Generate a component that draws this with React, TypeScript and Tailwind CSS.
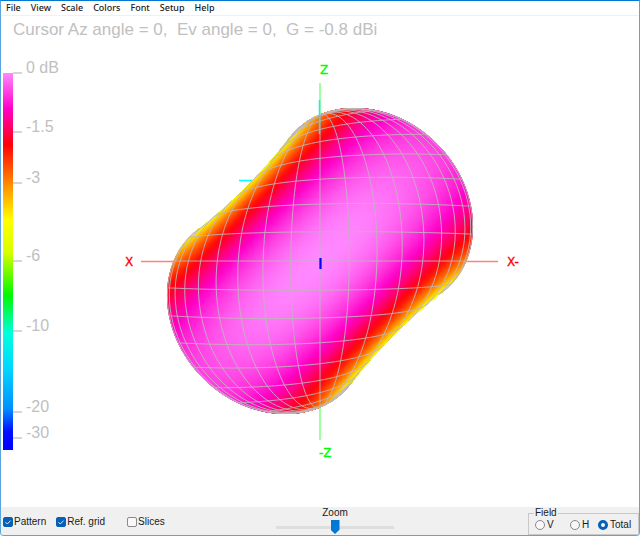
import { useState } from "react";

type Rgb = [number, number, number];

const MENUS = ["File", "View", "Scale", "Colors", "Font", "Setup", "Help"];
const FIELDS = ["V", "H", "Total"];

// Relative field strength -> colour
const RAMP: { level: number; rgb: Rgb }[] = [
  { level: 1, rgb: [255, 136, 255] },
  { level: 0.905, rgb: [255, 0, 200] },
  { level: 0.81, rgb: [255, 0, 8] },
  { level: 0.708, rgb: [255, 136, 0] },
  { level: 0.61, rgb: [255, 255, 0] },
  { level: 0.525, rgb: [216, 255, 0] },
  { level: 0.41, rgb: [0, 248, 0] },
  { level: 0.31, rgb: [0, 255, 220] },
  { level: 0.22, rgb: [0, 216, 255] },
  { level: 0.11, rgb: [0, 144, 255] },
  { level: 0.05, rgb: [0, 16, 255] },
  { level: 0, rgb: [0, 0, 255] },
];

const TICKS = [
  { label: "0 dB", y: 73 },
  { label: "-1.5", y: 132 },
  { label: "-3", y: 183 },
  { label: "-6", y: 261 },
  { label: "-10", y: 331 },
  { label: "-20", y: 412 },
  { label: "-30", y: 438 },
];

const CX = 320;
const CY = 261;
const RADIUS = 169;
const STEP = 2.5;
const GRID = 10;
const rad = (deg: number) => (deg * Math.PI) / 180;

function rampColor(level: number) {
  for (let i = 1; i < RAMP.length; i++) {
    const hi = RAMP[i - 1];
    const lo = RAMP[i];
    if (level >= lo.level) {
      const t = Math.min(1, (level - lo.level) / (hi.level - lo.level));
      const c = lo.rgb.map((v, k) => Math.round(v + (hi.rgb[k] - v) * t));
      return `rgb(${c.join(",")})`;
    }
  }
  return "rgb(0,0,255)";
}

// Power gain towards azimuth/elevation, 1 at the broadside direction
function gain(az: number, el: number) {
  const x = Math.cos(rad(el)) * Math.sin(rad(az));
  const y = Math.cos(rad(el)) * Math.cos(rad(az));
  const z = Math.sin(rad(el));
  const a2 = (x - z) ** 2 / 2;
  const b2 = (x + z) ** 2 / 2;
  const g = 1 - a2 - 0.1 * b2 + 0.2 * a2 * b2 - 0.2 * a2 * y * y;
  return Math.min(1, Math.max(0.02, g));
}

function project(az: number, el: number): [number, number] {
  const r = RADIUS * (1 + 0.45 * Math.log10(gain(az, el)));
  return [CX + r * Math.cos(rad(el)) * Math.sin(rad(az)), CY - r * Math.sin(rad(el))];
}

function buildSurface() {
  const patches: { d: string; fill: string }[] = [];
  let grid = "";
  const f = (p: [number, number]) => `${p[0].toFixed(2)} ${p[1].toFixed(2)}`;
  for (let el = -90; el < 90; el += STEP) {
    for (let az = -90; az < 90; az += STEP) {
      const g = gain(az + STEP / 2, el + STEP / 2);
      const a = project(az, el);
      const b = project(az + STEP, el);
      const c = project(az + STEP, el + STEP);
      const d = project(az, el + STEP);
      // Skip patches that face away from the viewer or sit inside the null
      const area = (c[0] - a[0]) * (d[1] - b[1]) - (d[0] - b[0]) * (c[1] - a[1]);
      if (area >= 0 || g < 0.15) continue;
      patches.push({
        d: `M${f(a)}L${f(b)}L${f(c)}L${f(d)}Z`,
        fill: rampColor(Math.sqrt(g)),
      });
      if (el % GRID === 0) grid += `M${f(a)}L${f(b)}`;
      if (az % GRID === 0) grid += `M${f(a)}L${f(d)}`;
      if (az + STEP === 90) grid += `M${f(b)}L${f(c)}`;
    }
  }
  return { patches, grid };
}

const SURFACE = buildSurface();

function PatternPlot({ pattern, grid }: { pattern: boolean; grid: boolean }) {
  return (
    <svg
      viewBox="1 16 638 491"
      className="h-full w-full [grid-area:1/1]"
      role="img"
      aria-label="Radiation pattern"
    >
      <defs>
        {/* Blends neighbouring patches while keeping the silhouette sharp */}
        <filter
          id="blend"
          x="0"
          y="0"
          width="1"
          height="1"
          colorInterpolationFilters="sRGB"
        >
          <feGaussianBlur in="SourceGraphic" stdDeviation="2" result="soft" />
          <feComposite in="soft" in2="SourceAlpha" operator="in" result="inside" />
          <feMerge>
            <feMergeNode in="SourceGraphic" />
            <feMergeNode in="inside" />
          </feMerge>
        </filter>
      </defs>
      <path d="M141 261.5H498" stroke="#ff8080" strokeWidth="1.5" />
      <path d="M320 83V440" stroke="#80ff80" strokeWidth="1.5" />
      <path d="M239 180.5H254" stroke="#00ffff" strokeWidth="1.5" />
      {pattern && (
        <g filter="url(#blend)">
          {SURFACE.patches.map((p) => (
            <path key={p.d} d={p.d} fill={p.fill} stroke={p.fill} strokeWidth="0.7" />
          ))}
        </g>
      )}
      {grid && <path d={SURFACE.grid} stroke="#c0b4bc" strokeWidth="0.9" fill="none" />}
      <path d="M319.5 100V134" stroke="#20e8f0" strokeWidth="1.5" />
      <path d="M320.5 258V269" stroke="#0000ff" strokeWidth="2.2" />
      <g fontFamily="'DejaVu Sans', sans-serif" fontSize="12" strokeWidth="0.3">
        <text x="320" y="74" fill="#00ff00" stroke="#00ff00">Z</text>
        <text x="319" y="457" fill="#00ff00" stroke="#00ff00">-Z</text>
        <text x="125" y="266" fill="#ff0000" stroke="#ff0000">X</text>
        <text x="507" y="266" fill="#ff0000" stroke="#ff0000">X-</text>
      </g>
    </svg>
  );
}

function ColorScale() {
  return (
    <svg
      viewBox="1 16 100 491"
      preserveAspectRatio="xMinYMid meet"
      className="h-full w-[100px] [grid-area:1/1]"
      role="img"
      aria-label="Gain scale"
    >
      <defs>
        <linearGradient id="ramp" x1="0" y1="0" x2="0" y2="1">
          {RAMP.map((s) => (
            <stop key={s.level} offset={1 - s.level} stopColor={`rgb(${s.rgb.join(",")})`} />
          ))}
        </linearGradient>
      </defs>
      <rect x="3" y="73" width="10" height="377" fill="url(#ramp)" />
      {TICKS.map((t) => (
        <g key={t.label}>
          <path d={`M13 ${t.y}h9`} stroke="#c8c8c8" strokeWidth="1.5" />
          <text
            x="26"
            y={t.y}
            fill="#c0c0c0"
            fontSize="16"
            fontFamily="'Liberation Sans', Arial, sans-serif"
          >
            {t.label}
          </text>
        </g>
      ))}
    </svg>
  );
}

function Check(props: { label: string; checked: boolean; onChange: (v: boolean) => void }) {
  return (
    <label className="flex items-center gap-px">
      <span className="grid">
        <input
          type="checkbox"
          checked={props.checked}
          onChange={(e) => props.onChange(e.target.checked)}
          className="size-[10px] appearance-none rounded-[2px] border border-[#8a8a8a] bg-[#f8f8f8] [grid-area:1/1] checked:border-[#0560b6] checked:bg-[#0560b6]"
        />
        {props.checked && (
          <svg viewBox="0 0 10 10" className="pointer-events-none size-[10px] [grid-area:1/1]">
            <path d="M2.5 5.2L4.3 7L7.6 3.6" stroke="#d8ecff" fill="none" />
          </svg>
        )}
      </span>
      {props.label}
    </label>
  );
}

export default function App() {
  const [pattern, setPattern] = useState(true);
  const [grid, setGrid] = useState(true);
  const [slices, setSlices] = useState(false);
  const [zoom, setZoom] = useState(50);
  const [field, setField] = useState("Total");

  return (
    <div className="flex h-screen flex-col overflow-hidden rounded-b-[4px] border border-[#5aa5de] border-t-[#0078d4] bg-white font-['Liberation_Sans',Arial,sans-serif] text-[10px] leading-3 text-[#1a1a1a]">
      <nav className="flex h-[15px] shrink-0 items-center gap-[10px] border-b border-[#f0f0f0] px-[5px] font-['Noto_Sans','Open_Sans',sans-serif] text-[9px] font-medium leading-[14px]">
        {MENUS.map((m) => (
          <button key={m} type="button">
            {m}
          </button>
        ))}
      </nav>

      <main className="grid min-h-0 flex-1 grid-cols-[minmax(0,1fr)] grid-rows-[minmax(0,1fr)]">
        <PatternPlot pattern={pattern} grid={grid} />
        <ColorScale />
        <p className="self-start whitespace-pre px-3 pt-1 text-[17px] leading-5 text-[#c0c0c0] [grid-area:1/1]">
          {"Cursor Az angle = 0,  Ev angle = 0,  G = -0.8 dBi"}
        </p>
      </main>

      <footer className="grid h-7 shrink-0 grid-cols-[275px_118px_1fr] bg-[#f0f0f0]">
        <div className="flex items-center pl-[2px] pt-px">
          <div className="flex gap-[10px]">
            <Check label="Pattern" checked={pattern} onChange={setPattern} />
            <Check label="Ref. grid" checked={grid} onChange={setGrid} />
          </div>
          <div className="pl-[22px]">
            <Check label="Slices" checked={slices} onChange={setSlices} />
          </div>
        </div>
        <label className="flex flex-col items-center">
          Zoom
          <input
            type="range"
            value={zoom}
            onChange={(e) => setZoom(Number(e.target.value))}
            className="h-[17px] w-full appearance-none bg-transparent [&::-webkit-slider-runnable-track]:h-[3px] [&::-webkit-slider-runnable-track]:bg-[#dedede] [&::-webkit-slider-thumb]:-mt-[6px] [&::-webkit-slider-thumb]:h-[14px] [&::-webkit-slider-thumb]:w-[9px] [&::-webkit-slider-thumb]:appearance-none [&::-webkit-slider-thumb]:bg-[#0078d7] [&::-webkit-slider-thumb]:[clip-path:polygon(0_0,100%_0,100%_70%,50%_100%,0_70%)]"
          />
        </label>
        <fieldset className="ml-auto h-7 w-[111px] border border-[#c8c8c8] px-[5px]">
          <legend className="h-3 px-px">Field</legend>
          <div className="grid grid-cols-[35px_28px_auto] pl-px">
            {FIELDS.map((f) => (
              <label key={f} className="flex items-center gap-[2px]">
                <input
                  type="radio"
                  name="field"
                  checked={field === f}
                  onChange={() => setField(f)}
                  className="size-[10px] appearance-none rounded-full border border-[#8a8a8a] bg-[#f8f8f8] checked:border-[3px] checked:border-[#0560b6]"
                />
                {f}
              </label>
            ))}
          </div>
        </fieldset>
      </footer>
    </div>
  );
}
